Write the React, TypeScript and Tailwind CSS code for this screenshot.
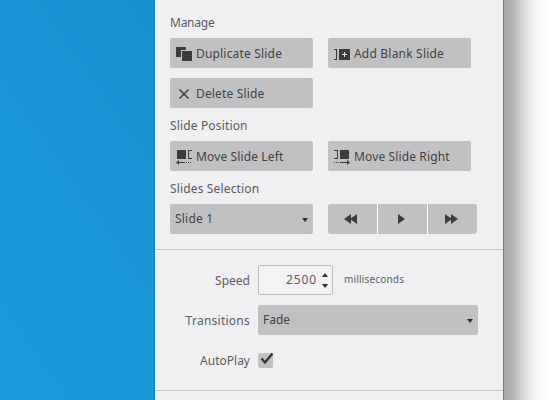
import type { ReactNode } from 'react';

const INK = '#3c3c3f';

function Label({ children, className = '' }: { children: ReactNode; className?: string }) {
  return <span className={`block whitespace-nowrap text-[12px] leading-4 text-[#5a5a5e] ${className}`}>{children}</span>;
}

function ToolButton({ icon, children, className = '' }: { icon: ReactNode; children: ReactNode; className?: string }) {
  return (
    <button className="flex h-[30px] w-[143px] items-center rounded-[2px] bg-[#c1c1c3] pl-[6px] text-[#414144]">
      <svg width="20" height="30" viewBox="0 0 20 30" className="shrink-0" fill={INK} shapeRendering="crispEdges">
        {icon}
      </svg>
      <span className={`whitespace-nowrap pt-[2px] text-[12px] leading-4 ${className}`}>{children}</span>
    </button>
  );
}

function Caret({ up = false, className = '' }: { up?: boolean; className?: string }) {
  return (
    <svg width="6" height="4" viewBox="0 0 6 4" fill="#2f2f32" className={className}>
      <path d={up ? 'M0 4L3 0L6 4Z' : 'M0 0H6L3 4Z'} />
    </svg>
  );
}

const duplicateIcon = (
  <>
    <rect x="0" y="9" width="10" height="10" />
    <rect x="5" y="12" width="12" height="12" fill="#c1c1c3" />
    <rect x="6" y="13" width="10" height="10" />
  </>
);

const addIcon = (
  <>
    <path d="M0 11H3V22H0V21H2V12H0Z" />
    <rect x="5" y="11" width="11" height="11" />
    <path d="M8 16H13V17H8ZM10 14H11V19H10Z" fill="#e4e4e6" />
  </>
);

const deleteIcon = (
  <path d="M3.5 11.5L12.5 20.5M12.5 11.5L3.5 20.5" stroke={INK} strokeWidth="1.5" shapeRendering="auto" />
);

const moveLeftIcon = (
  <>
    <rect x="1" y="9" width="9" height="9" />
    <path d="M12 9H16V10H13V17H16V18H12Z" />
    <path d="M1 21H9V22H1ZM2 20H3V23H2ZM10 21H11V22H10ZM12 21H13V22H12ZM14 21H15V22H14Z" />
    <path d="M0 21.5L3 19V24Z" shapeRendering="auto" />
  </>
);

const moveRightIcon = (
  <>
    <rect x="6" y="9" width="9" height="9" />
    <path d="M0 9H4V18H0V17H3V10H0Z" />
    <path d="M0 21H1V22H0ZM2 21H3V22H2ZM4 21H5V22H4ZM6 21H15V22H6Z" />
    <path d="M16 21.5L13 19V24Z" shapeRendering="auto" />
  </>
);

function Transport({ d, className }: { d: string; className: string }) {
  return (
    <button className={`flex h-[30px] w-[49px] items-center bg-[#c1c1c3] ${className}`}>
      <svg width="49" height="30" viewBox="0 0 49 30" fill={INK}>
        <path d={d} />
      </svg>
    </button>
  );
}

export default function App() {
  return (
    <div className="flex h-[400px] w-[560px] overflow-hidden bg-white font-['Noto_Sans','Open_Sans',sans-serif]">
      <div className="w-[155px] shrink-0 border-r border-[#1680bd] bg-[linear-gradient(55deg,#199adb_0%,#1a97d9_35%,#1a93d6_65%,#178ed0_100%)]" />
      <main className="w-[349px] shrink-0 border-r border-[#7d7d7e] bg-[#f0f0f3]">
        <section className="h-[250px] border-b border-[#c9c9cc] pl-[15px] pt-[15px]">
          <Label className="tracking-[-0.25px]">Manage</Label>
          <div className="mt-[7px] grid grid-cols-[143px_143px] gap-x-[15px] gap-y-[10px]">
            <ToolButton icon={duplicateIcon} className="tracking-[0.18px]">Duplicate Slide</ToolButton>
            <ToolButton icon={addIcon} className="tracking-[0.2px]">Add Blank Slide</ToolButton>
            <ToolButton icon={deleteIcon} className="tracking-[0.15px]">Delete Slide</ToolButton>
          </div>
          <Label className="mt-[10px] tracking-[0.15px]">Slide Position</Label>
          <div className="mt-[7px] flex gap-[15px]">
            <ToolButton icon={moveLeftIcon} className="tracking-[0.13px]">Move Slide Left</ToolButton>
            <ToolButton icon={moveRightIcon} className="tracking-[0.13px]">Move Slide Right</ToolButton>
          </div>
          <Label className="mt-[10px] tracking-[0.15px]">Slides Selection</Label>
          <div className="mt-[7px] flex gap-[15px]">
            <button className="flex h-[30px] w-[143px] items-center justify-between rounded-[2px] bg-[#c1c1c3] pl-[5px] pr-[5px] text-[12px] tracking-[0.2px] text-[#414144]">
              <span>Slide 1</span>
              <Caret className="mt-[2px]" />
            </button>
            <div className="flex gap-px bg-white">
              <Transport className="rounded-l-[2px]" d="M16 15L23 10V20ZM22 15L29 10V20Z" />
              <Transport className="" d="M20 10L27 15L20 20Z" />
              <Transport className="rounded-r-[2px]" d="M17 10L24 15L17 20ZM23 10L30 15L23 20Z" />
            </div>
          </div>
        </section>
        <section className="h-[141px] border-b border-[#c9c9cc] pt-[15px]">
          <div className="flex h-[30px] items-center">
            <Label className="w-[95px] pt-[2px] text-right">Speed</Label>
            <div className="ml-2 flex h-[30px] w-[75px] items-center justify-end rounded-[2px] border border-[#bcbcbf] bg-[#f3f3f5] pr-[4px]">
              <span className="text-[12px] leading-4 tracking-[0.9px] text-[#5a5a5e]">2500</span>
              <span className="ml-[5px] flex flex-col gap-[7px]">
                <Caret up />
                <Caret />
              </span>
            </div>
            <span className="ml-[11px] pb-[3px] text-[10px] leading-4 tracking-[0.17px] text-[#5f5f63]">milliseconds</span>
          </div>
          <div className="mt-[10px] flex h-[30px] items-center">
            <Label className="w-[95px] pt-[2px] text-right tracking-[0.25px]">Transitions</Label>
            <button className="ml-2 flex h-[30px] w-[220px] items-center justify-between rounded-[2px] bg-[#c1c1c3] px-[5px] text-[12px] text-[#414144]">
              <span>Fade</span>
              <Caret className="mt-[2px]" />
            </button>
          </div>
          <div className="mt-[10px] flex h-[30px] items-center">
            <Label className="w-[95px] pt-[2px] text-right">AutoPlay</Label>
            <span className="ml-2 h-[15px] w-[15px] rounded-[2px] bg-[#c1c1c3]">
              <svg width="15" height="15" viewBox="0 0 15 15" className="overflow-visible" fill="none">
                <path d="M3.5 5.5L7 9.5L14.5 0.5" stroke="#343437" strokeWidth="2.3" />
              </svg>
            </span>
          </div>
        </section>
      </main>
      <div className="grow bg-[linear-gradient(90deg,#a6a6a6_0px,#b4b4b4_8px,#d0d0d0_17px,#e8e8e8_25px,#f8f8f8_34px,#ffffff_46px)]" />
    </div>
  );
}
